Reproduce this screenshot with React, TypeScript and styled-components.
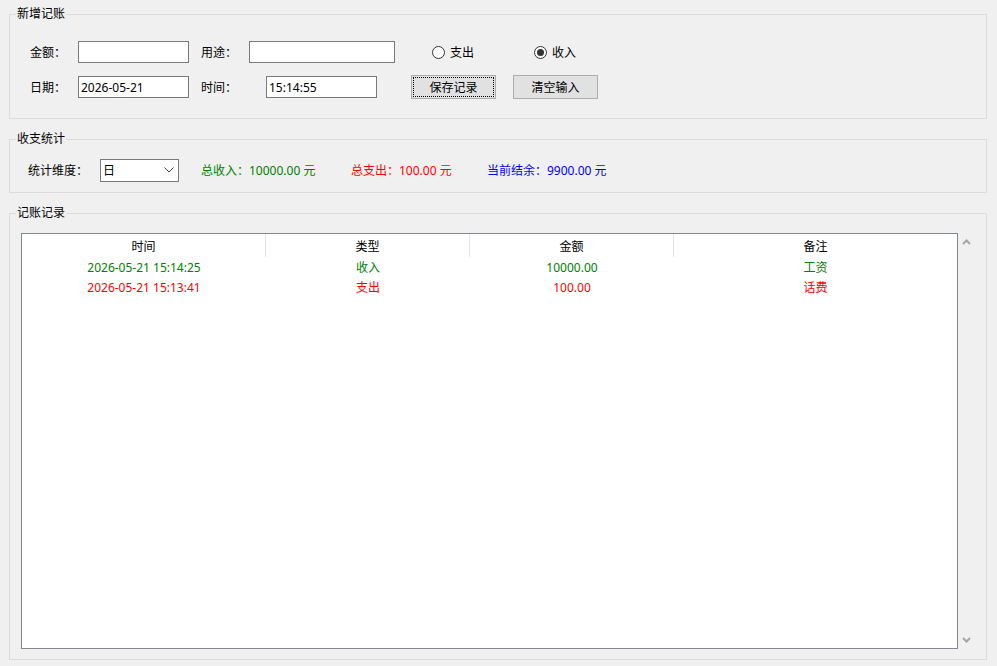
import React, { useState } from "react";
import styled, { createGlobalStyle } from "styled-components";

type Kind = "income" | "expense";

interface Entry {
  time: string;
  kind: Kind;
  amount: string;
  note: string;
}

const entries: Entry[] = [
  { time: "2026-05-21 15:14:25", kind: "income", amount: "10000.00", note: "工资" },
  { time: "2026-05-21 15:13:41", kind: "expense", amount: "100.00", note: "话费" },
];

const kindLabel: Record<Kind, string> = { income: "收入", expense: "支出" };
const kindColor: Record<Kind, string> = { income: "#008000", expense: "#ff0000" };

const App: React.FC = () => {
  const [kind, setKind] = useState<Kind>("income");

  return (
    <>
      <GlobalStyle />
      <Page>
        <Group>
          <Legend>新增记账</Legend>
          <FormBody>
            <FormRow>
              <FieldLabel width={48}>金额：</FieldLabel>
              <TextBox width={111} defaultValue="" />
              <FieldLabel width={48} gap={12}>用途：</FieldLabel>
              <TextBox width={146} defaultValue="" />
              <RadioItem gap={37} width={102} onClick={() => setKind("expense")}>
                <RadioCircle checked={kind === "expense"} />
                支出
              </RadioItem>
              <RadioItem onClick={() => setKind("income")}>
                <RadioCircle checked={kind === "income"} />
                收入
              </RadioItem>
            </FormRow>
            <FormRow>
              <FieldLabel width={48}>日期：</FieldLabel>
              <TextBox width={111} defaultValue="2026-05-21" />
              <FieldLabel width={65} gap={12}>时间：</FieldLabel>
              <TextBox width={111} defaultValue="15:14:55" />
              <Button gap={34} focused>保存记录</Button>
              <Button gap={17}>清空输入</Button>
            </FormRow>
          </FormBody>
        </Group>

        <Group>
          <Legend>收支统计</Legend>
          <StatsBody>
            <FieldLabel width={72}>统计维度：</FieldLabel>
            <Combo>
              <span>日</span>
              <svg width="10" height="6" viewBox="0 0 10 6">
                <path d="M0.5 0.5 L5 5 L9.5 0.5" fill="none" stroke="#444" strokeWidth="1" />
              </svg>
            </Combo>
            <Stat color="#008000" gap={22} width={150}>总收入：10000.00 元</Stat>
            <Stat color="#ff0000" width={136}>总支出：100.00 元</Stat>
            <Stat color="#0000ff">当前结余：9900.00 元</Stat>
          </StatsBody>
        </Group>

        <ListGroup>
          <Legend>记账记录</Legend>
          <ListBody>
            <ListView>
              <Grid>
                <HeadCell>时间</HeadCell>
                <HeadCell>类型</HeadCell>
                <HeadCell>金额</HeadCell>
                <HeadCell last>备注</HeadCell>
                {entries.map((e) => (
                  <React.Fragment key={e.time}>
                    <Cell color={kindColor[e.kind]}>{e.time}</Cell>
                    <Cell color={kindColor[e.kind]}>{kindLabel[e.kind]}</Cell>
                    <Cell color={kindColor[e.kind]}>{e.amount}</Cell>
                    <Cell color={kindColor[e.kind]}>{e.note}</Cell>
                  </React.Fragment>
                ))}
              </Grid>
            </ListView>
            <ScrollTrack>
              <svg width="9" height="6" viewBox="0 0 9 6">
                <path d="M1 5 L4.5 1.5 L8 5" fill="none" stroke="#a6a6a6" strokeWidth="2" />
              </svg>
              <svg width="9" height="6" viewBox="0 0 9 6">
                <path d="M1 1 L4.5 4.5 L8 1" fill="none" stroke="#a6a6a6" strokeWidth="2" />
              </svg>
            </ScrollTrack>
          </ListBody>
        </ListGroup>
      </Page>
    </>
  );
};

export default App;

const GlobalStyle = createGlobalStyle`
  html, body {
    margin: 0;
    padding: 0;
    background: #f0f0f0;
  }
  body {
    font-family: "Noto Sans", "Noto Sans CJK SC", sans-serif;
    font-size: 12px;
    color: #000;
  }
`;

const Page = styled.div`
  width: 997px;
  height: 666px;
  box-sizing: border-box;
  padding: 6px 10px 6px 9px;
  display: flex;
  flex-direction: column;
  gap: 12px;
  background: #f0f0f0;
`;

const Group = styled.fieldset`
  margin: 0;
  padding: 0;
  border: 1px solid #dcdcdc;
  min-width: 0;
`;

const ListGroup = styled(Group)`
  flex: 1;
  display: flex;
  flex-direction: column;
`;

const Legend = styled.legend`
  margin-left: 6px;
  padding: 0 1px;
  font-size: 12px;
  line-height: 16px;
`;

const FormBody = styled.div`
  display: flex;
  flex-direction: column;
  gap: 11px;
  padding: 18px 0 19px 20px;
`;

const FormRow = styled.div`
  display: flex;
  align-items: center;
  height: 24px;
`;

// labels sit one pixel lower than the box centre, like the native controls
const FieldLabel = styled.span<{ width: number; gap?: number }>`
  width: ${(p) => p.width}px;
  margin-left: ${(p) => p.gap ?? 0}px;
  padding-top: 2px;
  flex-shrink: 0;
  line-height: 16px;
  white-space: nowrap;
`;

const TextBox = styled.input<{ width: number }>`
  width: ${(p) => p.width}px;
  height: 22px;
  box-sizing: border-box;
  border: 1px solid #7a7a7a;
  background: #fff;
  padding: 0 2px;
  font: inherit;
  font-size: 12px;
  color: #000;
  outline: none;
  flex-shrink: 0;
`;

const RadioItem = styled.label<{ gap?: number; width?: number }>`
  display: flex;
  align-items: center;
  gap: 5px;
  margin-left: ${(p) => p.gap ?? 0}px;
  padding-top: 2px;
  width: ${(p) => (p.width ? `${p.width}px` : "auto")};
  cursor: default;
  line-height: 16px;
`;

const RadioCircle = styled.span<{ checked: boolean }>`
  width: 13px;
  height: 13px;
  box-sizing: border-box;
  border: 1px solid #333;
  border-radius: 50%;
  background: #fff;
  display: flex;
  align-items: center;
  justify-content: center;
  margin-top: -1px;

  &::after {
    content: "";
    width: 7px;
    height: 7px;
    border-radius: 50%;
    background: #333;
    display: ${(p) => (p.checked ? "block" : "none")};
  }
`;

const Button = styled.button<{ gap?: number; focused?: boolean }>`
  width: 85px;
  height: 24px;
  margin-left: ${(p) => p.gap ?? 0}px;
  box-sizing: border-box;
  border: 1px solid #adadad;
  background: #e1e1e1;
  font: inherit;
  font-size: 12px;
  color: #000;
  padding: 0;
  outline: ${(p) => (p.focused ? "1px dotted #000" : "none")};
  outline-offset: -3px;
  flex-shrink: 0;
`;

const StatsBody = styled.div`
  display: flex;
  align-items: center;
  height: 24px;
  padding: 11px 0 10px 18px;
`;

const Combo = styled.div`
  width: 79px;
  height: 23px;
  box-sizing: border-box;
  border: 1px solid #7a7a7a;
  background: #fff;
  display: flex;
  align-items: center;
  justify-content: space-between;
  padding: 0 4px 0 2px;
  flex-shrink: 0;
`;

const Stat = styled.span<{ color: string; gap?: number; width?: number }>`
  color: ${(p) => p.color};
  margin-left: ${(p) => p.gap ?? 0}px;
  width: ${(p) => (p.width ? `${p.width}px` : "auto")};
  padding-top: 2px;
  flex-shrink: 0;
  white-space: nowrap;
  line-height: 16px;
`;

const ListBody = styled.div`
  flex: 1;
  display: flex;
  padding: 12px 11px 10px 11px;
  min-height: 0;
`;

const ListView = styled.div`
  width: 938px;
  box-sizing: border-box;
  border: 1px solid #828790;
  background: #fff;
  overflow: hidden;
`;

const Grid = styled.div`
  display: grid;
  grid-template-columns: 244px 204px 204px 1fr;
  grid-template-rows: 23px;
  grid-auto-rows: 20px;
`;

const HeadCell = styled.div<{ last?: boolean }>`
  display: flex;
  align-items: center;
  justify-content: center;
  border-right: ${(p) => (p.last ? "none" : "1px solid #e5e5e5")};
`;

const Cell = styled.div<{ color: string }>`
  display: flex;
  align-items: center;
  justify-content: center;
  color: ${(p) => p.color};
  white-space: nowrap;
`;

const ScrollTrack = styled.div`
  width: 17px;
  flex-shrink: 0;
  display: flex;
  flex-direction: column;
  align-items: center;
  justify-content: space-between;
  padding: 6px 0 6px 0;
  box-sizing: border-box;
`;
